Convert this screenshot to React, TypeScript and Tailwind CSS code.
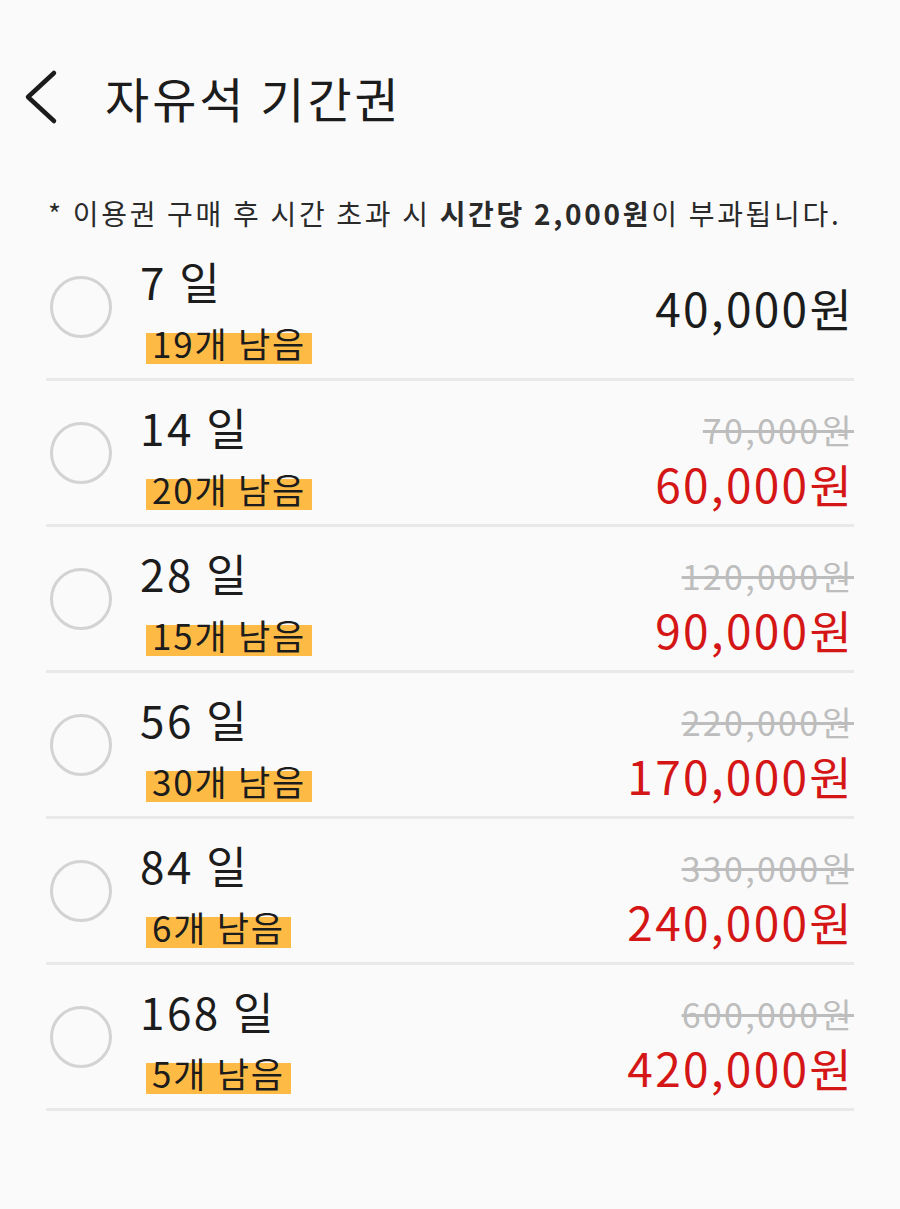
import React from 'react';

interface Plan {
    days: number;
    left: number;
    price: string;
    original?: string;
}

const plans: Plan[] = [
    { days: 7, left: 19, price: '40,000원' },
    { days: 14, left: 20, price: '60,000원', original: '70,000원' },
    { days: 28, left: 15, price: '90,000원', original: '120,000원' },
    { days: 56, left: 30, price: '170,000원', original: '220,000원' },
    { days: 84, left: 6, price: '240,000원', original: '330,000원' },
    { days: 168, left: 5, price: '420,000원', original: '600,000원' },
];

function PlanRow({ plan }: { plan: Plan }) {
    return (
        <div className="flex items-center h-[146px] border-b-[3px] border-[#e9e9e9]">
            {/* Radio */}
            <div className="ml-[4px] w-[62px] h-[62px] rounded-full border-[3px] border-[#d3d3d3] shrink-0" />

            {/* Days + remaining */}
            <div className="ml-[28px] pt-[8px] flex flex-col gap-[15px]">
                <div className="text-[44px] leading-[50px] tracking-[2.5px] text-[#1c1c1c]">{plan.days} 일</div>
                <div className="pl-[6px]">
                    <span className="inline-block h-[44px] leading-[44px] px-[6px] text-[35px] tracking-[1.8px] text-[#1c1c1c] bg-[linear-gradient(to_bottom,transparent_12px,#fdbb46_12px,#fdbb46_43px,transparent_43px)]">
                        {plan.left}개 남음
                    </span>
                </div>
            </div>

            {/* Price */}
            <div className="ml-auto flex flex-col items-end">
                {plan.original ? (
                    <div className="pt-[13px] flex flex-col items-end gap-[8px]">
                        <div className="text-[34px] leading-[40px] tracking-[2.3px] text-[#bdbdbd] line-through decoration-[3px]">
                            {plan.original}
                        </div>
                        <div className="text-[46px] leading-[50px] tracking-[2.3px] text-[#d41616]">{plan.price}</div>
                    </div>
                ) : (
                    <div className="text-[46px] leading-[50px] tracking-[2.3px] text-[#1c1c1c]">{plan.price}</div>
                )}
            </div>
        </div>
    );
}

export default function App() {
    return (
        <div
            className="w-[900px] h-[1209px] bg-[#fafafa] overflow-hidden"
            style={{ fontFamily: '"Noto Sans CJK KR", "Noto Sans", sans-serif' }}
        >
            {/* Header */}
            <div className="flex items-center h-[120px] mt-[37px] pl-[22px]">
                <svg width="40" height="56" viewBox="0 0 40 56" className="shrink-0">
                    <path d="M32 4 L6 28 L32 52" fill="none" stroke="#1c1c1c" strokeWidth="4.5" strokeLinecap="round" strokeLinejoin="round" />
                </svg>
                <h1 className="ml-[43px] text-[48px] leading-none tracking-[3px] font-normal text-[#1c1c1c]">자유석 기간권</h1>
            </div>

            {/* Notice */}
            <p className="mt-[38px] pl-[48px] text-[28px] leading-[36px] tracking-[2.7px] text-[#2a2a2a] whitespace-nowrap">
                * 이용권 구매 후 시간 초과 시 <span className="font-bold">시간당 2,000원</span>이 부과됩니다.
            </p>

            {/* Plans */}
            <div className="mt-[4px] mx-[46px] flex flex-col">
                {plans.map((plan) => (
                    <PlanRow key={plan.days} plan={plan} />
                ))}
            </div>
        </div>
    );
}
